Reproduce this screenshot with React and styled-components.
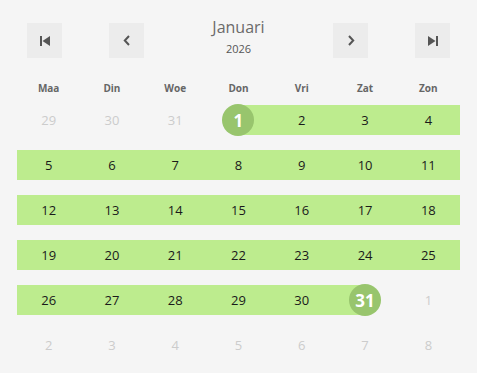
import React from "react";
import styled, { createGlobalStyle } from "styled-components";

const Global = createGlobalStyle`
  html, body { margin: 0; padding: 0; background: #f5f5f5; }
  body { font-family: "Open Sans", "Liberation Sans", sans-serif; }
`;

const Page = styled.div`
  width: 477px;
  height: 373px;
  background: #f5f5f5;
  box-sizing: border-box;
  padding-top: 17px;
`;

const Header = styled.div`
  display: flex;
  align-items: flex-start;
  gap: 47px;
  padding: 0 27px;
`;

const NavButton = styled.button`
  width: 35px;
  height: 35px;
  margin-top: 6px;
  border: none;
  padding: 0;
  background: #ececec;
  display: flex;
  align-items: center;
  justify-content: center;
  color: #555;
  cursor: pointer;
  flex: none;
`;

const Title = styled.div`
  flex: 1;
  display: flex;
  flex-direction: column;
  align-items: center;
  gap: 5px;
`;

const Month = styled.div`
  font-size: 16px;
  line-height: 20px;
  color: #6a6a6a;
`;

const Year = styled.div`
  font-size: 11px;
  line-height: 14px;
  color: #555;
`;

const Weekdays = styled.div`
  display: grid;
  grid-template-columns: repeat(7, 1fr);
  padding: 0 17px;
  margin-top: 23px;
`;

const Weekday = styled.div`
  text-align: center;
  font-size: 10px;
  line-height: 14px;
  font-weight: 700;
  color: #666;
`;

const Grid = styled.div`
  display: grid;
  grid-template-columns: repeat(7, 1fr);
  row-gap: 15px;
  padding: 0 17px;
  margin-top: 10px;
`;

const bg = (range) => {
  const g = "#bdec8e";
  if (range === "full") return g;
  if (range === "start") return `linear-gradient(to right, transparent 50%, ${g} 50%)`;
  if (range === "end") return `linear-gradient(to right, ${g} 50%, transparent 50%)`;
  return "transparent";
};

const Cell = styled.div`
  height: 30px;
  display: flex;
  align-items: center;
  justify-content: center;
  background: ${(p) => bg(p.$range)};
  font-size: 13px;
  color: ${(p) => (p.$muted ? "#cccccc" : "#1a1a1a")};
`;

const Marker = styled.div`
  width: 32px;
  height: 32px;
  flex: none;
  border-radius: 50%;
  background: #98c56d;
  color: #fff;
  font-weight: 700;
  font-size: 17px;
  display: flex;
  align-items: center;
  justify-content: center;
`;

const FirstIcon = () => (
  <svg width="10" height="10" viewBox="0 0 10 10">
    <rect x="0" y="0" width="2" height="10" fill="currentColor" />
    <polygon points="10,0 10,10 2.5,5" fill="currentColor" />
  </svg>
);
const LastIcon = () => (
  <svg width="10" height="10" viewBox="0 0 10 10">
    <polygon points="0,0 0,10 7.5,5" fill="currentColor" />
    <rect x="8" y="0" width="2" height="10" fill="currentColor" />
  </svg>
);
const Chevron = ({ dir }) => (
  <svg width="8" height="11" viewBox="0 0 8 11">
    <polyline
      points={dir === "left" ? "6,1 1.8,5.5 6,10" : "2,1 6.2,5.5 2,10"}
      fill="none"
      stroke="currentColor"
      strokeWidth="2"
    />
  </svg>
);

const days = ["Maa", "Din", "Woe", "Don", "Vri", "Zat", "Zon"];

const cells = [];
[29, 30, 31].forEach((d) => cells.push({ d, muted: true }));
for (let d = 1; d <= 31; d++) {
  cells.push({
    d,
    range: d === 1 ? "start" : d === 31 ? "end" : "full",
    marker: d === 1 || d === 31,
  });
}
for (let d = 1; d <= 8; d++) cells.push({ d, muted: true });

export default function App() {
  return (
    <>
      <Global />
      <Page>
        <Header>
          <NavButton aria-label="first"><FirstIcon /></NavButton>
          <NavButton aria-label="previous"><Chevron dir="left" /></NavButton>
          <Title>
            <Month>Januari</Month>
            <Year>2026</Year>
          </Title>
          <NavButton aria-label="next"><Chevron dir="right" /></NavButton>
          <NavButton aria-label="last"><LastIcon /></NavButton>
        </Header>
        <Weekdays>
          {days.map((d) => (
            <Weekday key={d}>{d}</Weekday>
          ))}
        </Weekdays>
        <Grid>
          {cells.map((c, i) => (
            <Cell key={i} $range={c.range} $muted={c.muted}>
              {c.marker ? <Marker>{c.d}</Marker> : c.d}
            </Cell>
          ))}
        </Grid>
      </Page>
    </>
  );
}
